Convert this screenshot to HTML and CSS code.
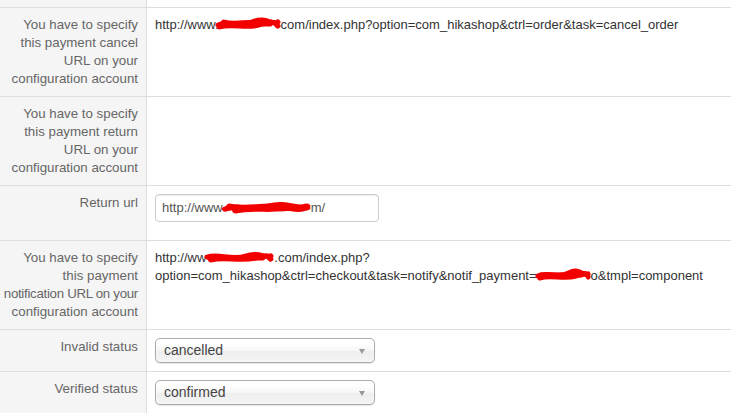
FILE: index.html
```html
<!DOCTYPE html>
<html lang="en">
<head>
  <meta charset="UTF-8">
  <title>Payment plugin parameters</title>
  <link rel="stylesheet" href="styles.css">
</head>
<body>

  <table class="admintable">
    <tr class="cut">
      <td class="key"></td>
      <td></td>
    </tr>
    <tr>
      <td class="key">You have to specify<br>this payment cancel<br>URL on your<br>configuration account</td>
      <td class="value">http://www.<span class="blot blot-a"><svg viewBox="0 0 60 14" preserveAspectRatio="none"><path d="M3 8 C12 3 22 11 34 5 S52 9 57 5"/><path d="M4 10 C16 6 28 12 40 8 S54 4 57 9"/><path d="M8 5 C20 9 30 3 44 6"/><path d="M6 7 L50 7"/></svg></span>com/index.php?option=com_hikashop&amp;ctrl=order&amp;task=cancel_order</td>
    </tr>
    <tr>
      <td class="key">You have to specify<br>this payment return<br>URL on your<br>configuration account</td>
      <td class="value"></td>
    </tr>
    <tr>
      <td class="key">Return url</td>
      <td class="value">
        <div class="input">http://www<span class="blot blot-b"><svg viewBox="0 0 60 14" preserveAspectRatio="none"><path d="M3 9 C10 4 20 11 32 6 S50 10 57 6"/><path d="M6 6 C18 10 30 3 44 8 S55 5 57 8"/><path d="M10 11 C22 7 36 12 50 7"/><path d="M5 8 L52 8"/></svg></span>m/</div>
      </td>
    </tr>
    <tr>
      <td class="key">You have to specify<br>this payment<br><span class="squeeze">notification URL on your</span><br>configuration account</td>
      <td class="value">http://ww<span class="blot blot-c"><svg viewBox="0 0 60 14" preserveAspectRatio="none"><path d="M3 7 C12 3 24 11 36 6 S52 9 57 6"/><path d="M6 10 C18 6 30 12 44 8 S54 6 57 9"/><path d="M5 8 L50 8"/></svg></span>.com/index.php?<br>option=com_hikashop&amp;ctrl=checkout&amp;task=notify&amp;notif_payment=<span class="blot blot-d"><svg viewBox="0 0 60 14" preserveAspectRatio="none"><path d="M3 8 C12 3 24 11 36 5 S52 9 57 6"/><path d="M5 10 C18 6 30 12 44 8 S54 5 57 9"/><path d="M6 7 L50 7"/></svg></span>o&amp;tmpl=component</td>
    </tr>
    <tr>
      <td class="key">Invalid status</td>
      <td class="value"><div class="select">cancelled<span class="arrow"></span></div></td>
    </tr>
    <tr>
      <td class="key">Verified status</td>
      <td class="value"><div class="select">confirmed<span class="arrow"></span></div></td>
    </tr>
  </table>

</body>
</html>
```

FILE: styles.css
```css
body {
  margin: 0;
  font-family: "Liberation Sans", Arial, sans-serif;
  font-size: 13px;
  line-height: 18px;
  color: #333;
  background: #fff;
}
.admintable {
  width: 100%;
  border-collapse: collapse;
}
.admintable td {
  border-top: 1px solid #ddd;
  padding: 8px;
  vertical-align: top;
}
.admintable td.key {
  width: 138px;
  padding-left: 0;
  text-align: right;
  white-space: nowrap;
  font-size: 13.3px;
  color: #666;
  background: #f5f5f5;
  border-right: 1px solid #ddd;
}
.admintable tr.cut td {
  border-top: none;
  padding: 0;
  height: 7px;
}
.squeeze {
  letter-spacing: -0.3px;
}
.value {
  white-space: nowrap;
}
.blot {
  display: inline-block;
  vertical-align: -2px;
  height: 14px;
}
.blot svg {
  display: block;
  width: 100%;
  height: 100%;
}
.blot path {
  fill: none;
  stroke: #f20000;
  stroke-width: 5;
  stroke-linecap: round;
}
.blot-a { width: 66px; margin-left: -4px; }
.blot-b { width: 90px; margin-left: -2px; }
.blot-c { width: 70px; margin-left: -2px; }
.blot-d { width: 56px; margin-left: -2px; }
.input {
  box-sizing: border-box;
  width: 224px;
  height: 28px;
  margin-bottom: 10px;
  padding: 4px 6px;
  border: 1px solid #ccc;
  border-radius: 4px;
  box-shadow: inset 0 1px 1px rgba(0, 0, 0, 0.075);
  color: #555;
}
.select {
  position: relative;
  box-sizing: border-box;
  width: 220px;
  height: 25px;
  padding: 2px 8px;
  border: 1px solid #aaa;
  border-radius: 5px;
  background: linear-gradient(#fff 20%, #f6f6f6 50%, #eee 52%, #f4f4f4 100%);
  box-shadow: inset 0 0 3px #fff, 0 1px 1px rgba(0, 0, 0, 0.1);
  color: #444;
  font-size: 14px;
}
.select .arrow {
  position: absolute;
  right: 9px;
  top: 10px;
  border-left: 3px solid transparent;
  border-right: 3px solid transparent;
  border-top: 5px solid #999;
}
```
